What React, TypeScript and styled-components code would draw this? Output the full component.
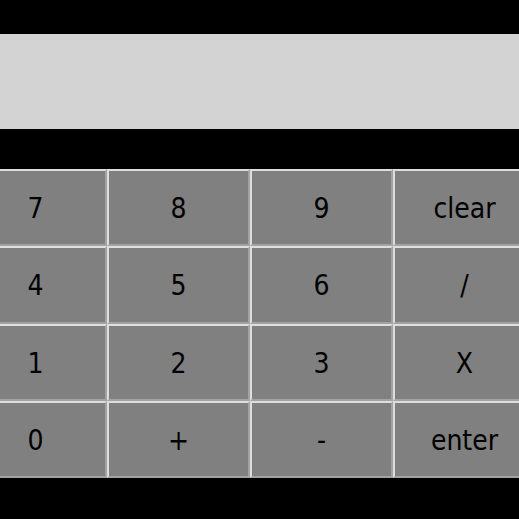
import React from "react";
import styled, { createGlobalStyle } from "styled-components";

const Global = createGlobalStyle`
  html, body {
    margin: 0;
    padding: 0;
    background: #000;
    overflow: hidden;
    width: 519px;
    height: 519px;
  }
`;

const Page = styled.div`
  display: flex;
  flex-direction: column;
  padding-top: 34px;
  gap: 40px;
  width: 519px;
  height: 519px;
  box-sizing: border-box;
  overflow: hidden;
  background: #000;
`;

const Display = styled.div`
  height: 95px;
  background: #d3d3d3;
  width: 100%;
`;

const Keypad = styled.div`
  display: grid;
  grid-template-columns: repeat(4, 143px);
  grid-auto-rows: 77.25px;
  width: 572px;
  margin-left: -36px;
`;

const Key = styled.button`
  box-sizing: border-box;
  margin: 0;
  padding: 2px 0 0 0;
  background: #808080;
  color: #000;
  border-style: solid;
  border-width: 2px;
  border-color: #dedede #a3a3a3 #a3a3a3 #dedede;
  font-family: "DejaVu Sans Condensed", "DejaVu Sans", Verdana, sans-serif;
  font-stretch: condensed;
  font-size: 28px;
  display: flex;
  align-items: center;
  justify-content: center;
  cursor: pointer;
`;

const keys = ["7", "8", "9", "clear", "4", "5", "6", "/", "1", "2", "3", "X", "0", "+", "-", "enter"];

export default function App() {
  return (
    <>
      <Global />
      <Page>
        <Display />
        <Keypad>
          {keys.map((k) => (
            <Key key={k}>{k}</Key>
          ))}
        </Keypad>
      </Page>
    </>
  );
}
